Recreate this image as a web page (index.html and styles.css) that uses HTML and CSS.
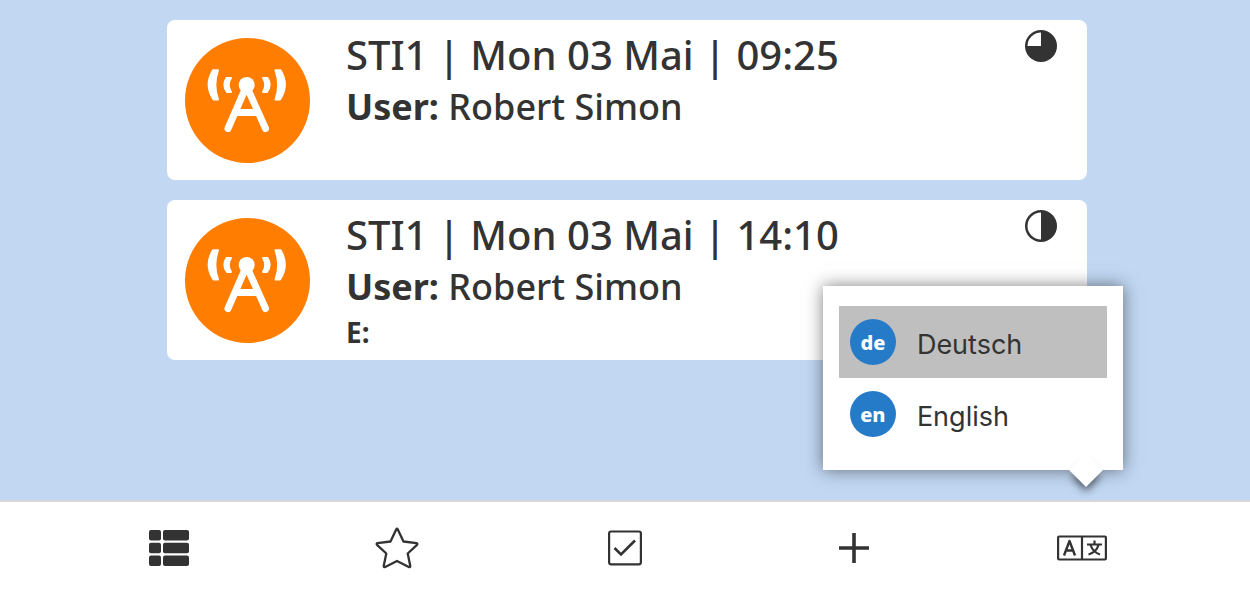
FILE: index.html
```html
<!DOCTYPE html>
<html lang="en">
<head>
<meta charset="utf-8">
<meta name="viewport" content="width=device-width, initial-scale=1">
<title>Tasks</title>
<link rel="stylesheet" href="styles.css">
</head>
<body>
<svg class="defs" aria-hidden="true">
  <symbol id="antenna" viewBox="0 0 125 125">
    <path fill="none" stroke="#fff" stroke-width="7" stroke-linecap="round" d="M43 90.500L61.500 48L80.500 90.500M51 74.500H73"/>
    <g fill="#fff" stroke="#fff" stroke-width="2" stroke-linejoin="round">
      <path d="M28 32.300H33Q27.700 47 33 61.500H28.500Q19 47 28 32.300ZM95.500 32.300H90.500Q95.800 47 90.500 61.500H95Q104.500 47 95.500 32.300Z"/>
      <path d="M41.500 40H46Q41.500 47 46 54H42Q37 47 41.500 40ZM82.500 40H78Q82.500 47 78 54H82Q87 47 82.500 40Z"/>
    </g>
    <circle cx="61.700" cy="47" r="8" fill="#fff"/>
  </symbol>
</svg>
<main class="tasks">
  <article class="card">
    <div class="badge"><svg class="badge-icon" aria-hidden="true"><use href="#antenna"/></svg></div>
    <div class="details">
      <h2 class="title">STI1 | Mon 03 Mai | 09:25</h2>
      <p class="user"><b>User:</b> Robert Simon</p>
    </div>
    <svg class="progress" viewBox="0 0 32 32" role="img" aria-label="Three quarters done"><circle cx="16" cy="16" r="16"/><path class="gap" d="M16 16V2.500A13.500 13.500 0 0 0 2.500 16Z"/></svg>
  </article>
  <article class="card">
    <div class="badge"><svg class="badge-icon" aria-hidden="true"><use href="#antenna"/></svg></div>
    <div class="details">
      <h2 class="title">STI1 | Mon 03 Mai | 14:10</h2>
      <p class="user"><b>User:</b> Robert Simon</p>
      <p class="extra">E:</p>
    </div>
    <svg class="progress" viewBox="0 0 32 32" role="img" aria-label="Half done"><circle cx="16" cy="16" r="16"/><path class="gap" d="M16 2.500A13.500 13.500 0 0 0 16 29.500Z"/></svg>
  </article>
</main>
<nav class="bar" aria-label="Main">
  <div class="slot"><button class="tool" aria-label="List">
    <svg width="40" height="36" viewBox="0 0 40 36" fill="currentColor"><rect width="12" height="10.500" rx="2"/><rect x="14" width="26" height="10.500" rx="2"/><rect y="12.700" width="12" height="10.500" rx="2"/><rect x="14" y="12.700" width="26" height="10.500" rx="2"/><rect y="25.400" width="12" height="10.500" rx="2"/><rect x="14" y="25.400" width="26" height="10.500" rx="2"/></svg>
  </button></div>
  <div class="slot"><button class="tool" aria-label="Favourites">
    <svg width="44" height="42" viewBox="0 0 44 42" fill="none" stroke="currentColor" stroke-width="2.300" stroke-linejoin="round"><path d="M21.200 2.500Q22 1 22.800 2.500L28.500 14.500L41.500 16.200Q43 16.700 42 17.800L32.700 26.500L35.300 39Q35.300 40.500 33.800 40L22 34L10.200 40Q8.700 40.500 8.700 39L11.300 26.500L2 17.800Q1 16.700 2.500 16.200L15.500 14.500Z"/></svg>
  </button></div>
  <div class="slot"><button class="tool" aria-label="Done">
    <svg width="34" height="36" viewBox="0 0 34 36" fill="none" stroke="currentColor" stroke-width="2.200"><rect x="1.100" y="1.500" width="31.800" height="32.800" rx="2"/><path stroke-width="2.600" d="M6.500 18L13 24.500L27 10.500"/></svg>
  </button></div>
  <div class="slot"><button class="tool" aria-label="Add">
    <svg width="30" height="30" viewBox="0 0 30 30" fill="none" stroke="currentColor" stroke-width="3.600"><path d="M0 15H30M15 0V30"/></svg>
  </button></div>
  <div class="slot"><button class="tool" aria-label="Language" aria-expanded="true">
    <svg width="50" height="26" viewBox="0 0 50 26" fill="none" stroke="currentColor" stroke-width="2.200"><rect x="1.100" y="1.500" width="47.800" height="23" rx="1"/><path d="M25 1.500V24.500"/><path stroke-width="2.400" stroke-linejoin="round" d="M7 20.500L12.500 6L18 20.500M9 15.500H16"/><path d="M30 9.500H45M37.500 5.500V9.500M41.500 10Q39.500 17 31.500 19.500M33.500 10Q36 17 43 19.500"/></svg>
  </button>
    <div class="languages">
      <button class="language selected"><span class="code">de</span><span>Deutsch</span></button>
      <button class="language"><span class="code">en</span><span>English</span></button>
    </div>
  </div>
</nav>
</body>
</html>
```

FILE: styles.css
```css
* {
  box-sizing: border-box;
}

body {
  margin: 0;
  min-height: 100vh;
  display: flex;
  flex-direction: column;
  background: #c1d7f2;
  color: #333;
  font-family: "Noto Sans", "Open Sans", sans-serif;
}

.defs {
  position: absolute;
  width: 0;
  height: 0;
}

.tasks {
  flex: 1;
  display: flex;
  flex-direction: column;
  gap: 20px;
  padding: 20px 163px 20px 167px;
}

.card {
  display: flex;
  align-items: flex-start;
  min-height: 160px;
  padding: 8px 30px 8px 18px;
  border-radius: 8px;
  background: #fff;
}

.badge {
  width: 125px;
  height: 125px;
  margin-top: 10px;
  border-radius: 50%;
  background: #ff7d00;
}

.badge-icon {
  display: block;
  width: 100%;
  height: 100%;
}

.details {
  flex: 1;
  padding-left: 36px;
}

.title,
.user,
.extra {
  margin: 0;
}

.title {
  font-size: 40px;
  font-weight: 500;
  line-height: 54px;
}

.user {
  font-size: 36px;
  font-weight: 500;
  line-height: 50px;
}

.extra {
  font-size: 28px;
  font-weight: 700;
  line-height: 40px;
}

.progress {
  width: 32px;
  height: 32px;
  margin-top: 2px;
  fill: #333;
}

.gap {
  fill: #fff;
}

.bar {
  display: grid;
  grid-template-columns: repeat(5, 1fr);
  height: 96px;
  padding: 0 54px 2px 55px;
  border-top: 2px solid #d8d8d8;
  background: #fff;
}

.slot {
  position: relative;
  display: flex;
  align-items: center;
  justify-content: center;
}

.tool {
  display: flex;
  padding: 0;
  border: 0;
  background: none;
  color: #333;
}

.languages {
  position: absolute;
  right: calc(50% - 41px);
  bottom: calc(100% + 32px);
  width: 300px;
  padding: 20px 16px;
  background: #fff;
  box-shadow: 0 0 16px rgba(0, 0, 0, 0.5);
}

.languages::after {
  content: "";
  position: absolute;
  right: 25px;
  bottom: -12px;
  width: 24px;
  height: 24px;
  background: #fff;
  box-shadow: 5px 5px 8px -2px rgba(0, 0, 0, 0.6);
  transform: rotate(45deg);
}

.language {
  display: flex;
  align-items: center;
  gap: 21px;
  width: 100%;
  height: 72px;
  padding: 4px 11px 0;
  border: 0;
  background: none;
  color: #333;
  font-family: Inter, sans-serif;
  font-size: 27px;
}

.selected {
  background: #bfbfbf;
}

.code {
  width: 46px;
  height: 46px;
  margin-bottom: 4px;
  border-radius: 50%;
  background: #267bc8;
  color: #fff;
  font-family: "Noto Sans", sans-serif;
  font-size: 20px;
  font-weight: 800;
  line-height: 47px;
  text-align: center;
}
```
